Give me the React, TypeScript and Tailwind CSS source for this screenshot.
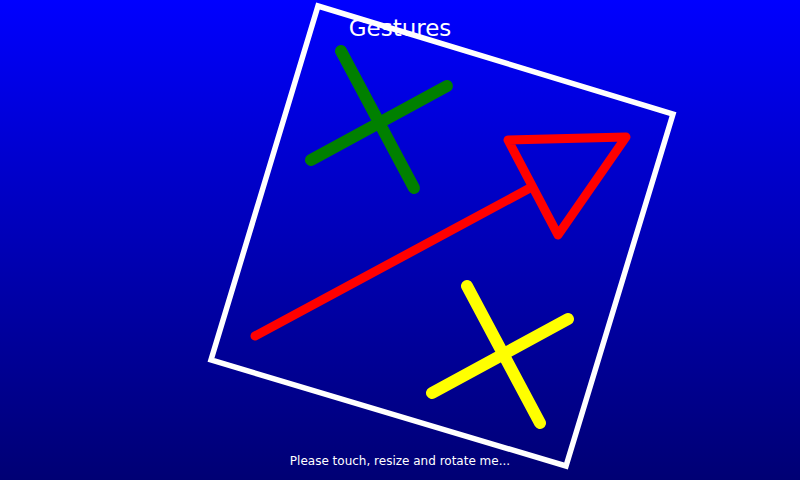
import React from "react";

// strokes drawn on the rotated card, in page coordinates
const STROKES = [
  { color: "#008000", w: 12, d: "M341 51 L414 188 M311 160 L447 86" },
  { color: "#ffff00", w: 12, d: "M467 286 L540 423 M432 393 L568 319" },
  { color: "#ff0000", w: 9, d: "M255 336 L530 188" },
];

export default function App() {
  return (
    <div
      className="relative w-[800px] h-[480px] overflow-hidden flex flex-col items-center justify-between bg-gradient-to-b from-[#0000ff] to-[#000074]"
      style={{ fontFamily: "'DejaVu Sans', sans-serif" }}
    >
      <h1 className="relative z-10 mt-[11px] text-[23px] leading-[34px] text-white">Gestures</h1>

      <svg className="absolute inset-0" width="800" height="480" viewBox="0 0 800 480">
        <polygon
          points="318,6 673,114 566,466 211,360"
          fill="none"
          stroke="#ffffff"
          strokeWidth="5.5"
        />
        {STROKES.map((s, i) => (
          <path key={i} d={s.d} stroke={s.color} strokeWidth={s.w} strokeLinecap="round" fill="none" />
        ))}
        <polygon
          points="508,140 626,137 558,235"
          fill="none"
          stroke="#ff0000"
          strokeWidth="9"
          strokeLinejoin="round"
        />
      </svg>

      <p className="relative z-10 mb-[12px] text-[12px] leading-[14px] text-white">
        Please touch, resize and rotate me...
      </p>
    </div>
  );
}
